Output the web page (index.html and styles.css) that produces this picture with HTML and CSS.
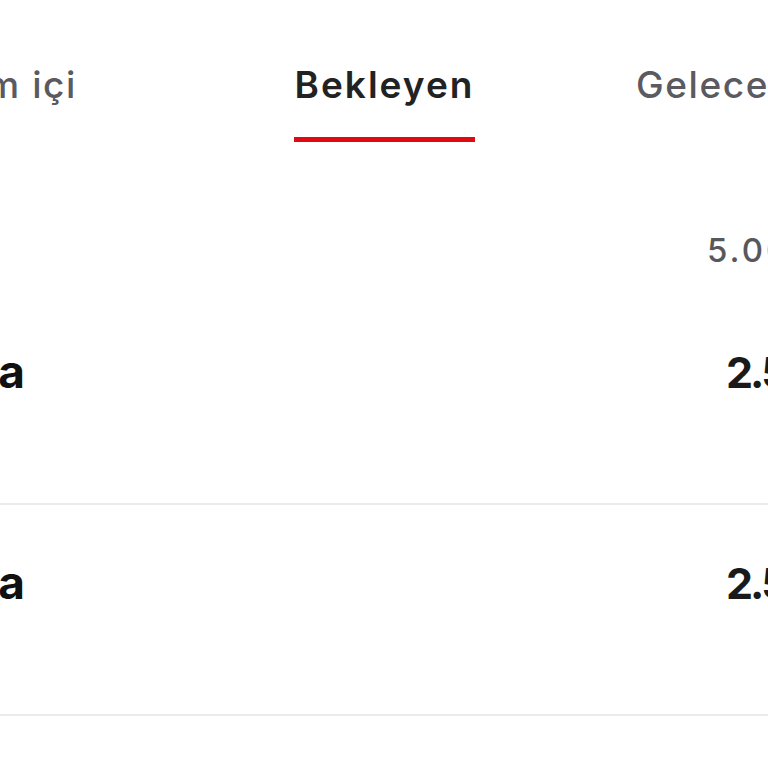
FILE: index.html
```html
<!DOCTYPE html>
<html lang="tr">
<head>
    <meta charset="UTF-8">
    <meta name="viewport" content="width=device-width, initial-scale=1.0">
    <title>Ödemeler</title>
    <link rel="stylesheet" href="styles.css">
</head>
<body>
    <div class="page">
        <nav class="tabs">
            <div class="tab tab-first">Dönem içi</div>
            <div class="tab tab-active">Bekleyen</div>
            <div class="tab tab-last">Gelecek</div>
        </nav>

        <div class="summary">
            <span class="summary-total">5.000,00 TL</span>
        </div>

        <div class="list">
            <div class="row">
                <div class="row-name">Kira</div>
                <div class="row-amount">2.500,00 TL</div>
            </div>
            <div class="row">
                <div class="row-name">Kira</div>
                <div class="row-amount">2.500,00 TL</div>
            </div>
        </div>
    </div>
</body>
</html>
```

FILE: styles.css
```css
html, body {
    margin: 0;
    padding: 0;
    background-color: #ffffff;
    overflow: hidden;
}
body {
    font-family: Inter, "Noto Sans", sans-serif;
    color: #141414;
    width: 768px;
    height: 768px;
}
.page {
    width: 768px;
}

/* sekmeler */
.tabs {
    display: flex;
    align-items: flex-start;
    padding-top: 67px;
    height: 75px;
}
.tab {
    font-size: 37px;
    line-height: 36px;
    font-weight: 500;
    letter-spacing: 1.6px;
    color: #5a5a60;
    white-space: nowrap;
    display: flex;
}
.tab-first {
    width: 77px;
    justify-content: flex-end;
}
.tab-active {
    margin-left: 217px;
    width: 181px;
    justify-content: center;
    color: #222222;
    font-weight: 600;
    letter-spacing: 2px;
    flex-direction: column;
    align-items: center;
}
.tab-active::after {
    content: "";
    display: block;
    width: 181px;
    height: 5px;
    margin-top: 34px;
    background-color: #e10a12;
}
.tab-last {
    margin-left: 161px;
}

/* toplam */
.summary {
    display: flex;
    margin-top: 92px;
    padding-left: 707px;
    height: 33px;
}
.summary-total {
    font-size: 33px;
    line-height: 33px;
    font-weight: 500;
    color: #58585c;
    white-space: nowrap;
    letter-spacing: 3px;
}

/* liste */
.list {
    margin-top: 27px;
}
.row {
    display: flex;
    align-items: baseline;
    padding: 54px 0 109px 0;
    border-bottom: 2px solid #ebebeb;
}
.row-name {
    width: 25px;
    display: flex;
    justify-content: flex-end;
    white-space: nowrap;
    font-size: 46px;
    line-height: 46px;
    font-weight: 700;
    color: #111111;
}
.row-amount {
    margin-left: auto;
    width: 42px;
    white-space: nowrap;
    font-size: 43px;
    line-height: 43px;
    font-weight: 700;
    letter-spacing: -3px;
    color: #1a1a1a;
}
```
